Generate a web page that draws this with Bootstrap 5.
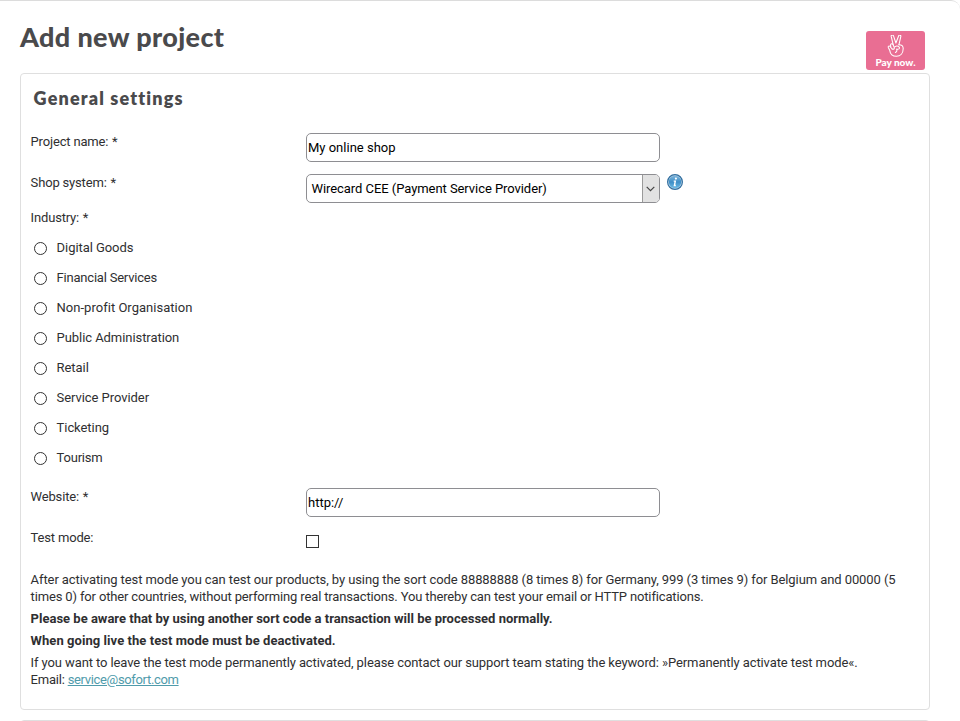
<!DOCTYPE html>
<html lang="en">
<head>
<meta charset="utf-8">
<meta name="viewport" content="width=device-width, initial-scale=1">
<title>Add new project</title>
<link href="https://cdn.jsdelivr.net/npm/bootstrap@5.3.0/dist/css/bootstrap.min.css" rel="stylesheet">
<style>
html, body { height: 100%; }
body { font-family: Roboto, "Liberation Sans", sans-serif; font-size: 13px; line-height: 17px; color: #2f2f31; background: #fff; overflow: hidden; }
.sheet { height: 721px; border-top: 1px solid #dcdcdc; border-top-right-radius: 9px; padding: 0 30px 0 20px; overflow: hidden; }
.sheet-head { height: 72px; }
.page-title { font: 900 27px/32px Lato, sans-serif; letter-spacing: .37px; color: #4a4a4c; margin: 20px 0 0; }
.pay-now { width: 59px; height: 39px; margin: 30px 5px 0 0; border-radius: 3px; background: #e96e93; }
.pay-now span { font: 900 10px/11px Lato, sans-serif; color: #fff; }
.panel { border: 1px solid #dfdfdf; border-radius: 4px; }
.panel-main { height: 637px; padding: 12px 12px 0 9.6px; }
.panel-next { height: 40px; margin-top: 10px; }
.panel-title { font: 800 18px/24px Lato, sans-serif; letter-spacing: 1.15px; color: #4a4a4c; margin: 0 0 23px 3px; }
.field-row { height: 41px; }
.field-label { width: 275.4px; letter-spacing: -.17px; }
.field-label i { font-style: normal; font-size: 13px; line-height: 1; margin-left: .7px; }
.field-row .form-control { width: 354px; height: 29px; border: 1px solid #8e8e92; border-radius: 5px; font-size: 13px; line-height: 17px; color: #000; padding: 0 0 0 1px; }
.shop-select { width: 354px; height: 29px; border: 1px solid #8e8e92; border-radius: 5px; color: #000; padding-left: 4.5px; letter-spacing: -.06px; overflow: hidden; }
.shop-arrow { width: 17px; background: #e2e2e2; border-left: 1px solid #9a9a9a; }
.info { margin-left: 7px; }
.industry { margin-top: -6px; margin-bottom: 13px; }
.choices { margin-bottom: 9px; }
.choice { height: 30px; padding-left: 3.4px; letter-spacing: -.06px; }
.choice .form-check-input, .mode-box.form-check-input { width: 13px; height: 13px; border: 1px solid #333; margin: 3px 9.6px 0 0; }
.mode-box.form-check-input { border-radius: 0; margin: 6px 0 0; }
.notes { padding-top: 1px; }
.note { margin: 0 0 5px; }
.mail-link { color: #4f9bab; letter-spacing: -.34px; }
.fit-1 { letter-spacing: -.085px; } .fit-2 { letter-spacing: -.15px; } .fit-3 { letter-spacing: -.1px; } .fit-4 { letter-spacing: .06px; } .fit-5 { letter-spacing: -.21px; } .fit-6 { letter-spacing: .02px; }
</style>
</head>
<body>
<main class="sheet">
  <header class="sheet-head d-flex justify-content-between align-items-start">
    <h1 class="page-title">Add new project</h1>
    <div class="pay-now d-flex flex-column align-items-center">
      <svg class="flex-shrink-0 mt-1" width="18" height="22" viewBox="0 0 18 22" fill="none" stroke="#fff" stroke-width="1.05" stroke-linecap="round" stroke-linejoin="round">
        <path d="M6.1 9.4 4.2 1.4C3.9-.3 6-.5 6.5.9L8.9 8 11.6 1C12.2-.5 14.2 0 13.8 1.6L11.9 9.8"/>
        <path d="M11.9 9.8C14.7 9.8 16.2 11.2 16.2 13.6C16.2 18.3 13.4 21.3 9.5 21.3C5.6 21.3 3.2 19 2.8 15.6L1.3 12.5C.8 11.2 2.2 10.4 3.1 11.5L4.9 13.8"/>
        <path d="M3.8 11.9 3.5 10.1C3.7 8.6 5.6 8.4 6.1 9.7L7.4 12.9C7.3 14.3 5.9 14.8 5 13.8M7.8 11.8C9.3 10.7 11.4 11.2 12.4 12.3C13 13.9 11.7 14.4 9.6 14.1C10.4 15.2 9.7 16.8 8.4 17.5"/>
      </svg>
      <span>Pay now.</span>
    </div>
  </header>

  <section class="panel panel-main">
    <h2 class="panel-title">General settings</h2>
    <form>
      <div class="field-row d-flex">
        <label class="field-label" for="project">Project name: <i>*</i></label>
        <input id="project" class="form-control" type="text" value="My online shop">
      </div>
      <div class="field-row d-flex">
        <span class="field-label">Shop system: <i>*</i></span>
        <div class="shop-select d-flex justify-content-between align-items-stretch">
          <span class="align-self-center">Wirecard CEE (Payment Service Provider)</span>
          <span class="shop-arrow d-flex align-items-center justify-content-center">
            <svg width="9" height="6" viewBox="0 0 9 6" fill="none" stroke="#444" stroke-width="1.2"><path d="M.7.8 4.5 4.6 8.3.8"/></svg>
          </span>
        </div>
        <svg class="info flex-shrink-0" width="16" height="16" viewBox="0 0 16 16">
          <defs><linearGradient id="blue" x2="0" y2="1"><stop stop-color="#7db5dc"/><stop offset=".5" stop-color="#3f8ec6"/><stop offset="1" stop-color="#6cbbe6"/></linearGradient></defs>
          <circle cx="8" cy="8" r="7.4" fill="#b9d3e6" stroke="#336f9f" stroke-width="1.2"/>
          <circle cx="8" cy="8" r="6.2" fill="url(#blue)"/>
          <circle cx="8.9" cy="4.6" r="1.1" fill="#fff"/>
          <path d="M6.7 7.1h1.6L7.4 11.5h1.4" fill="none" stroke="#fff" stroke-width="1.4"/>
        </svg>
      </div>
      <div class="field-label industry">Industry: <i>*</i></div>
      <div class="choices">
        <label class="choice d-flex"><input class="form-check-input" type="radio" name="industry">Digital Goods</label>
        <label class="choice d-flex fit-5"><input class="form-check-input" type="radio" name="industry">Financial Services</label>
        <label class="choice d-flex fit-6"><input class="form-check-input" type="radio" name="industry">Non-profit Organisation</label>
        <label class="choice d-flex"><input class="form-check-input" type="radio" name="industry">Public Administration</label>
        <label class="choice d-flex"><input class="form-check-input" type="radio" name="industry">Retail</label>
        <label class="choice d-flex"><input class="form-check-input" type="radio" name="industry">Service Provider</label>
        <label class="choice d-flex"><input class="form-check-input" type="radio" name="industry">Ticketing</label>
        <label class="choice d-flex fit-5"><input class="form-check-input" type="radio" name="industry">Tourism</label>
      </div>
      <div class="field-row d-flex">
        <label class="field-label" for="site">Website: <i>*</i></label>
        <input id="site" class="form-control" type="text" value="http://">
      </div>
      <div class="field-row d-flex">
        <label class="field-label" for="mode">Test mode:</label>
        <input id="mode" class="mode-box form-check-input" type="checkbox">
      </div>
    </form>
    <div class="notes text-nowrap">
      <p class="note"><span class="fit-1">After activating test mode you can test our products, by using the sort code 88888888 (8 times 8) for Germany, 999 (3 times 9) for Belgium and 00000 (5</span><br><span class="fit-2">times 0) for other countries, without performing real transactions. You thereby can test your email or HTTP notifications.</span></p>
      <p class="note fw-bold">Please be aware that by using another sort code a transaction will be processed normally.</p>
      <p class="note fw-bold fit-4">When going live the test mode must be deactivated.</p>
      <p class="note"><span class="fit-3">If you want to leave the test mode permanently activated, please contact our support team stating the keyword: »Permanently activate test mode«.</span><br><span class="fit-5">Email: </span><a class="mail-link" href="mailto:service@sofort.com">service@sofort.com</a></p>
    </div>
  </section>
  <section class="panel panel-next"></section>
</main>
</body>
</html>
